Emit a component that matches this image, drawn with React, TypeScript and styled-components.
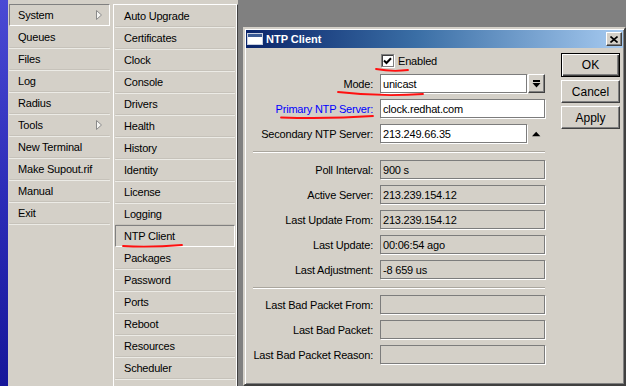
import React from "react";
import styled, { createGlobalStyle } from "styled-components";

const GlobalStyle = createGlobalStyle`
  html, body {
    margin: 0;
    padding: 0;
  }
  body {
    width: 626px;
    height: 386px;
    overflow: hidden;
    background: #808080;
    font-family: "Liberation Sans", Arial, sans-serif;
    font-size: 11px;
    letter-spacing: -0.2px;
    color: #000;
  }
`;

const Screen = styled.div`
  position: relative;
  display: flex;
  width: 626px;
  height: 386px;
  overflow: hidden;
`;

const TaskStrip = styled.div`
  flex: none;
  width: 8px;
  background: linear-gradient(180deg, #4a4ad4 0%, #2c2cb8 50%, #16169a 100%);
`;

const MenuPanel = styled.div`
  flex: none;
  display: flex;
  background: #d4d0c8;
`;

const MainMenu = styled.ul`
  list-style: none;
  margin: 0;
  padding: 4px 3px 0 1px;
  width: 105px;
  box-sizing: border-box;
`;

const SubMenu = styled.ul`
  list-style: none;
  margin: 4px 0 0 0;
  padding: 0 2px 0 1px;
  width: 125px;
  box-sizing: border-box;
  border-top: 1px solid #fff;
  border-left: 1px solid #fff;
  border-right: 1px solid #404040;
  box-shadow: inset -1px 0 0 #fff;
`;

const MenuItem = styled.li<{ $active?: boolean; $indent: number }>`
  display: flex;
  align-items: center;
  justify-content: space-between;
  height: 22px;
  box-sizing: border-box;
  padding: 0 7px 0 ${(p) => p.$indent}px;
  white-space: nowrap;
  border: 1px solid transparent;
  border-bottom-color: #c6c2ba;
  box-shadow: 0 1px 0 #ecebe6;
  ${(p) =>
    p.$active &&
    `
    border-color: #808080 #fff #fff #808080;
    box-shadow: none;
  `}
`;

const Desktop = styled.div`
  flex: 1;
  padding: 27px 0 0 5px;
  background: #808080;
`;

const Dialog = styled.div`
  width: 383px;
  height: 359px;
  box-sizing: border-box;
  padding: 1px;
  background: #d4d0c8;
  border: 2px solid;
  border-color: #d4d0c8 #404040 #404040 #d4d0c8;
  box-shadow: inset 1px 1px 0 #fff, inset -1px -1px 0 #808080;
`;

const TitleBar = styled.div`
  display: flex;
  align-items: center;
  gap: 3px;
  height: 18px;
  padding: 0 1px;
  background: linear-gradient(90deg, #0a246a 0%, #3a6ea5 45%, #a6caf0 100%);
  color: #fff;
  font-weight: bold;
  letter-spacing: 0;
`;

const CloseButton = styled.div`
  display: flex;
  align-items: center;
  justify-content: center;
  margin-left: auto;
  width: 16px;
  height: 14px;
  box-sizing: border-box;
  background: #d4d0c8;
  border: 1px solid;
  border-color: #fff #404040 #404040 #fff;
  box-shadow: inset -1px -1px 0 #808080;
`;

const Body = styled.div`
  display: flex;
  gap: 16px;
  padding: 5px 3px 0 7px;
`;

const Form = styled.div`
  display: grid;
  grid-template-columns: 120px 165px;
  grid-template-rows: 15px repeat(3, 19px) 5px repeat(5, 19px) 4px repeat(3, 19px);
  column-gap: 7px;
  row-gap: 6px;
`;

const Label = styled.div<{ $link?: boolean }>`
  grid-column: 1;
  justify-self: end;
  align-self: center;
  white-space: nowrap;
  color: ${(p) => (p.$link ? "#0000ff" : "#000")};
`;

const Field = styled.div`
  grid-column: 2;
  display: flex;
  align-items: center;
  gap: 1px;
`;

const Separator = styled.div`
  grid-column: 1 / span 2;
  height: 0;
  margin-top: 2px;
  border-top: 1px solid #aaa69e;
  border-bottom: 1px solid #fff;
`;

const Box = styled.div<{ $readOnly?: boolean; $width?: number }>`
  display: flex;
  align-items: center;
  height: 19px;
  box-sizing: border-box;
  ${(p) => (p.$width ? `width: ${p.$width}px; flex: none;` : "flex: 1;")}
  padding: 0 2px;
  background: ${(p) => (p.$readOnly ? "#d4d0c8" : "#fff")};
  border: 1px solid #7c7c7c;
  box-shadow: 1px 1px 0 #fff;
  white-space: nowrap;
`;

const DropButton = styled.div`
  display: flex;
  align-items: center;
  justify-content: center;
  flex: none;
  width: 17px;
  height: 19px;
  box-sizing: border-box;
  border: 1px solid;
  border-color: #fff #404040 #404040 #fff;
  box-shadow: inset -1px -1px 0 #808080;
`;

const CheckLine = styled.label`
  display: flex;
  align-items: center;
  gap: 4px;
  padding-left: 1px;
`;

const CheckBox = styled.span`
  display: flex;
  align-items: center;
  justify-content: center;
  width: 13px;
  height: 13px;
  box-sizing: border-box;
  background: #fff;
  border: 1px solid #808080;
  box-shadow: inset 1px 1px 0 #404040, 1px 1px 0 #fff;
`;

const ButtonColumn = styled.div`
  display: flex;
  flex-direction: column;
  gap: 3px;
  width: 59px;
`;

const Button = styled.div<{ $default?: boolean }>`
  display: flex;
  align-items: center;
  justify-content: center;
  height: ${(p) => (p.$default ? 24 : 23)}px;
  box-sizing: border-box;
  font-size: 12px;
  letter-spacing: 0;
  border: 1px solid;
  ${(p) =>
    p.$default
      ? `border-color: #000;
         box-shadow: inset 1px 1px 0 #fff, inset -1px -1px 0 #404040, inset -2px -2px 0 #808080;`
      : `border-color: #fff #404040 #404040 #fff;
         box-shadow: inset -1px -1px 0 #808080;`}
`;

const Marks = styled.svg`
  position: absolute;
  left: 0;
  top: 0;
  pointer-events: none;
`;

const mainItems = [
  { label: "System", arrow: true, active: true },
  { label: "Queues" },
  { label: "Files" },
  { label: "Log" },
  { label: "Radius" },
  { label: "Tools", arrow: true },
  { label: "New Terminal" },
  { label: "Make Supout.rif" },
  { label: "Manual" },
  { label: "Exit" },
];

const systemItems = [
  "Auto Upgrade",
  "Certificates",
  "Clock",
  "Console",
  "Drivers",
  "Health",
  "History",
  "Identity",
  "License",
  "Logging",
  "NTP Client",
  "Packages",
  "Password",
  "Ports",
  "Reboot",
  "Resources",
  "Scheduler",
];

const status = [
  ["Poll Interval:", "900 s"],
  ["Active Server:", "213.239.154.12"],
  ["Last Update From:", "213.239.154.12"],
  ["Last Update:", "00:06:54 ago"],
  ["Last Adjustment:", "-8 659 us"],
];

const badPacket = ["Last Bad Packet From:", "Last Bad Packet:", "Last Bad Packet Reason:"];

const SubArrow = () => (
  <svg width="6" height="10" viewBox="0 0 6 10">
    <polygon points="0.5,0.5 5.5,5 0.5,9.5" fill="#f4f3f0" stroke="#8a8a8a" strokeWidth="1" />
  </svg>
);

const WindowIcon = () => (
  <svg width="16" height="12" viewBox="0 0 16 12">
    <rect x="0.5" y="0.5" width="15" height="11" fill="#fff" stroke="#c8d0e0" />
    <rect x="1" y="1" width="14" height="3" fill="#3a5a94" />
  </svg>
);

const App: React.FC = () => {
  return (
    <Screen>
      <GlobalStyle />
      <TaskStrip />
      <MenuPanel>
        <MainMenu>
          {mainItems.map((item) => (
            <MenuItem key={item.label} $active={item.active} $indent={8}>
              <span>{item.label}</span>
              {item.arrow && <SubArrow />}
            </MenuItem>
          ))}
        </MainMenu>
        <SubMenu>
          {systemItems.map((name) => (
            <MenuItem key={name} $active={name === "NTP Client"} $indent={8}>
              <span>{name}</span>
            </MenuItem>
          ))}
        </SubMenu>
      </MenuPanel>
      <Desktop>
        <Dialog>
          <TitleBar>
            <WindowIcon />
            <span>NTP Client</span>
            <CloseButton>
              <svg width="8" height="7" viewBox="0 0 8 7">
                <path d="M0.5 0.5 L7.5 6.5 M7.5 0.5 L0.5 6.5" stroke="#000" strokeWidth="1.6" />
              </svg>
            </CloseButton>
          </TitleBar>
          <Body>
            <Form>
              <Field>
                <CheckLine>
                  <CheckBox>
                    <svg width="9" height="8" viewBox="0 0 9 8">
                      <path d="M1 3.5 L3.5 6 L8 1.2" fill="none" stroke="#000" strokeWidth="2" />
                    </svg>
                  </CheckBox>
                  Enabled
                </CheckLine>
              </Field>

              <Label>Mode:</Label>
              <Field>
                <Box>unicast</Box>
                <DropButton>
                  <svg width="9" height="8" viewBox="0 0 9 8">
                    <rect x="1" y="0" width="7" height="2" fill="#000" />
                    <polygon points="0.5,3 8.5,3 4.5,7.5" fill="#000" />
                  </svg>
                </DropButton>
              </Field>

              <Label $link>Primary NTP Server:</Label>
              <Field>
                <Box>clock.redhat.com</Box>
              </Field>

              <Label>Secondary NTP Server:</Label>
              <Field>
                <Box $width={147}>213.249.66.35</Box>
                <svg width="14" height="6" viewBox="0 0 14 6" style={{ marginLeft: 4 }}>
                  <polygon points="0,5.5 9,5.5 4.5,0.5" fill="#000" />
                </svg>
              </Field>

              <Separator />

              {status.map(([label, value]) => (
                <React.Fragment key={label}>
                  <Label>{label}</Label>
                  <Field>
                    <Box $readOnly>{value}</Box>
                  </Field>
                </React.Fragment>
              ))}

              <Separator />

              {badPacket.map((label) => (
                <React.Fragment key={label}>
                  <Label>{label}</Label>
                  <Field>
                    <Box $readOnly />
                  </Field>
                </React.Fragment>
              ))}
            </Form>
            <ButtonColumn>
              <Button $default>OK</Button>
              <Button>Cancel</Button>
              <Button>Apply</Button>
            </ButtonColumn>
          </Body>
        </Dialog>
      </Desktop>
      <Marks width="626" height="386" viewBox="0 0 626 386">
        <g fill="none" stroke="#ff1010" strokeWidth="1.8" strokeLinecap="round">
          <path d="M376 69 Q392 72 408 70" />
          <path d="M338 92 Q380 97 423 94" />
          <path d="M281 117.5 Q330 119 373 116" />
          <path d="M123 246 Q150 247.5 182 245" />
        </g>
      </Marks>
    </Screen>
  );
};

export default App;
